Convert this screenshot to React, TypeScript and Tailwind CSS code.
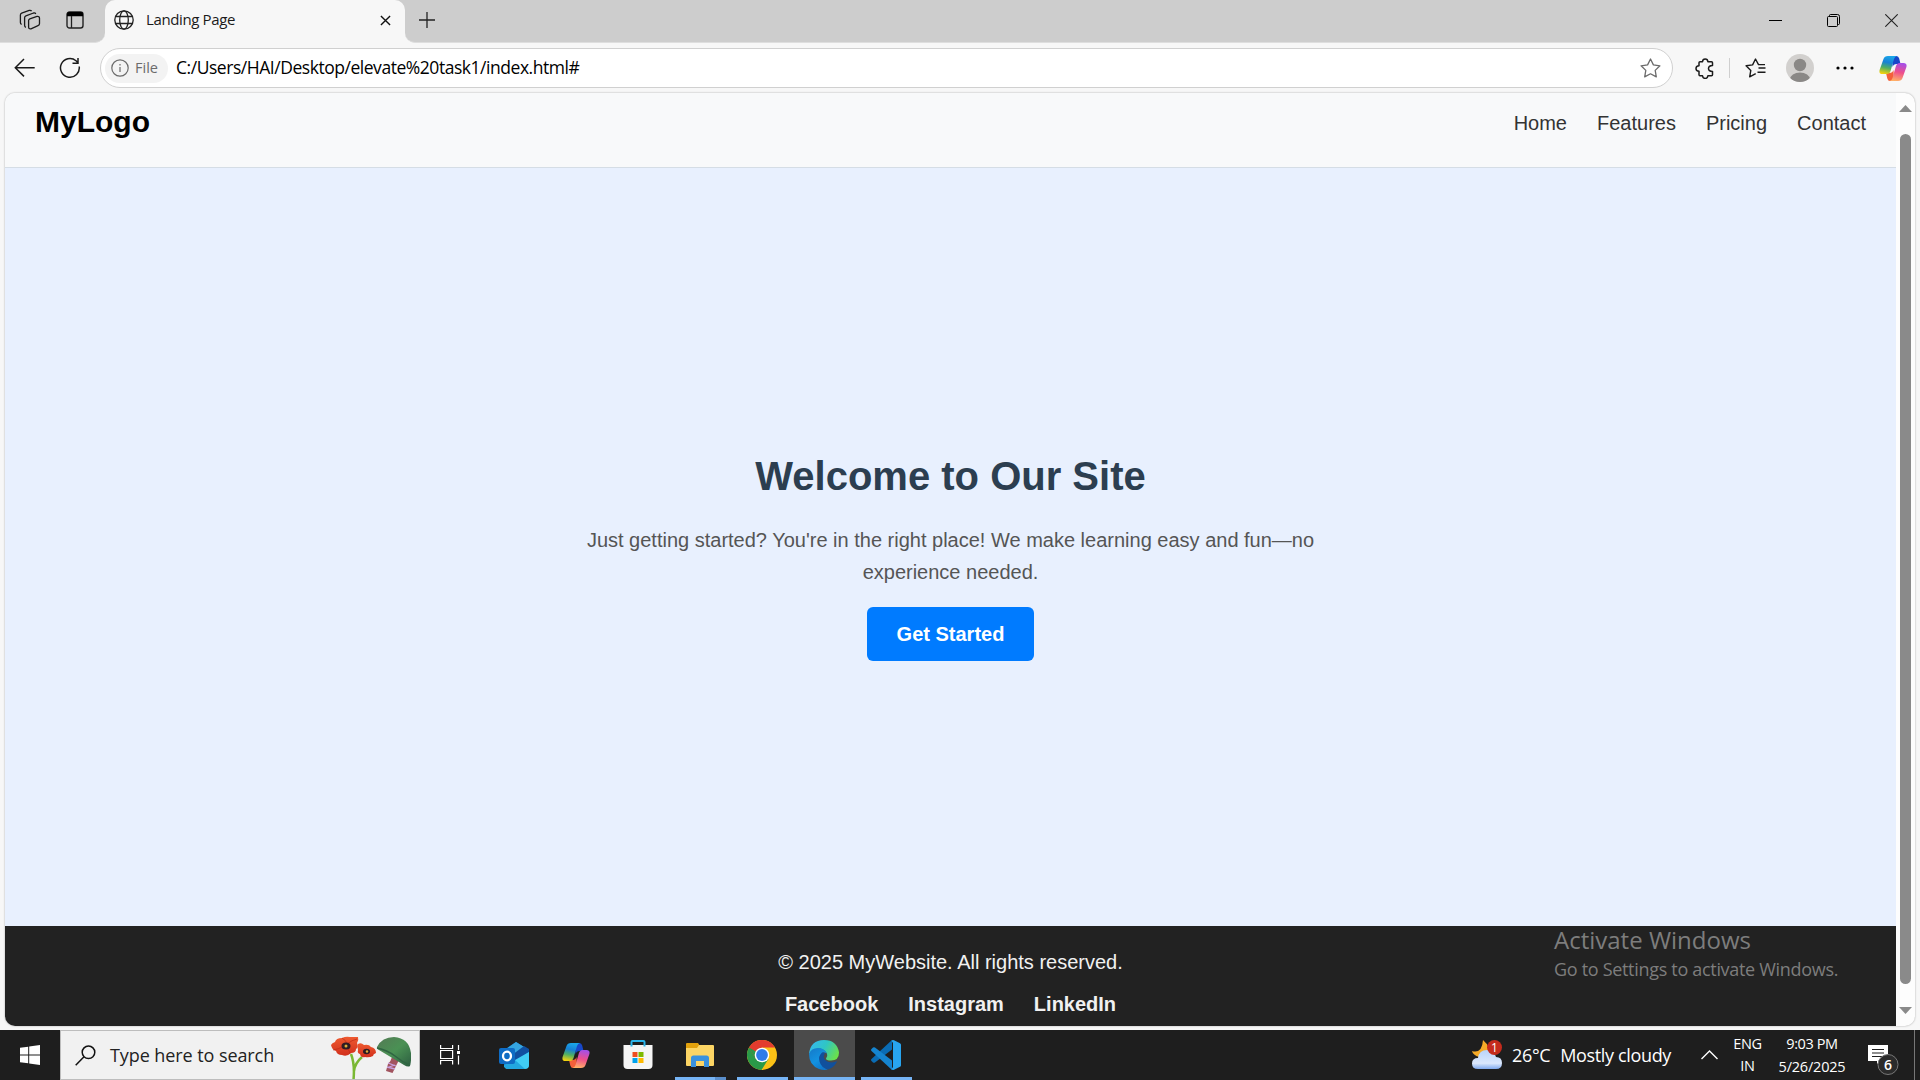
import React from "react";

const UI = "font-['Open_Sans','Noto_Sans',sans-serif]";

function Tabs() {
  return (
    <div className="flex h-[43px] shrink-0 items-stretch bg-[#f7f7f7]">
      <div className="flex w-[105px] items-center rounded-br-[10px] border-b border-[#dedede] bg-[#cdcdcd] pb-0.5 pl-[19px]">
        <svg width="22" height="22" viewBox="0 0 22 22" fill="none" stroke="#1b1b1b" strokeWidth="1.3">
          <path d="M10.800 9.800L18 7.400q2.500-.4 2.500 1.900v5.200q0 1.500-1.500 2.100L12 19.800q-2.400.5-2.400-1.900V11.500q0-1.200 1.200-1.700z" />
          <path d="M6.900 18.300q-1.300-.5-1.300-2V8.800q0-1.400 1.300-1.900L14.500 4q1.700-.4 2.300.9" />
          <path d="M2.600 15.500q-1.200-.6-1.200-2V6q0-1.400 1.300-1.900l7.500-2.700q1.700-.4 2.400.7" />
        </svg>
        <svg className="ml-[25px]" width="18" height="18" viewBox="0 0 18 18">
          <rect x="1" y="1" width="16" height="16" rx="2.5" fill="none" stroke="#222" strokeWidth="1.4" />
          <path d="M1 5.200V3a2 2 0 0 1 2-2h12a2 2 0 0 1 2 2v2.200Z" fill="#000" />
          <path d="M5.500 5v12" stroke="#222" strokeWidth="1.300" />
        </svg>
      </div>
      <div className="flex w-[300px] bg-[#cdcdcd]">
        <div className="flex flex-1 items-center rounded-t-[10px] bg-[#f7f7f7] pb-[3px] pl-[9px] pr-3">
          <svg width="20" height="20" viewBox="0 0 20 20" fill="none" stroke="#222" strokeWidth="1.300">
            <circle cx="10" cy="10" r="9.200" /><ellipse cx="10" cy="10" rx="4.300" ry="9.200" /><path d="M1.700 6.500h16.600M1.700 13.500h16.600" />
          </svg>
          <span className={UI + " -mt-px ml-3 whitespace-nowrap text-[15px] tracking-[-0.38px] text-[#1b1b1b]"}>Landing Page</span>
          <svg className="ml-auto mr-[2px]" width="11" height="11" viewBox="0 0 12 12" stroke="#111" strokeWidth="1.500"><path d="M1 1l10 10M11 1L1 11" /></svg>
        </div>
      </div>
      <div className="flex flex-1 items-center rounded-bl-[10px] border-b border-[#dedede] bg-[#cdcdcd] pb-[2px] pl-[13px]">
        <svg width="18" height="18" viewBox="0 0 18 18" stroke="#222" strokeWidth="1.300"><path d="M9 1v16M1 9h16" /></svg>
        <svg className="ml-auto mr-[45px]" width="13" height="13" viewBox="0 0 13 13" stroke="#000" strokeWidth="1"><path d="M0 6.500h13" /></svg>
        <svg className="mr-[45px]" width="13" height="13" viewBox="0 0 13 13" fill="none" stroke="#000"><rect x=".5" y="2.500" width="10" height="10" rx="1" /><path d="M2.500 2.500V1.500q0-1 1-1h7q2 0 2 2v7q0 1-1 1h-1" /></svg>
        <svg className="mr-[22px] mt-px" width="13" height="13" viewBox="0 0 13 13" stroke="#222" strokeWidth="1.100"><path d="M.3.3l12.400 12.400M12.700.3L.3 12.700" /></svg>
      </div>
    </div>
  );
}

function Copilot({ id }: { id: string }) {
  return (
    <svg width="28" height="27" viewBox="0 0 28 27">
      <defs>
        <linearGradient id={id + "a"} x1=".5" y1="0" x2=".3" y2="1"><stop offset="0" stopColor="#1aa5e8" /><stop offset=".35" stopColor="#1781d6" /><stop offset=".65" stopColor="#4fae63" /><stop offset="1" stopColor="#f5d20c" /></linearGradient>
        <linearGradient id={id + "b"} x1=".6" y1="0" x2=".4" y2="1"><stop offset="0" stopColor="#a54fe8" /><stop offset=".5" stopColor="#ee4f8c" /><stop offset="1" stopColor="#ffb066" /></linearGradient>
      </defs>
      <path d="M13 1h4.500q2 0 2.700 2.600L21.500 9h-4q-3 0-4 3z" fill="#1747c9" />
      <path d="M15 26h-4q-2 0-2.700-2.500L7 18h3.500q3 0 4-3z" fill="#f4603a" />
      <path d="M9 1H18q-2.300.3-3 3L11.700 15.500q-1 3.500-3.700 3.500H3.500Q-.3 19 .6 15L4.400 4.300Q5.500 1 9 1z" fill={"url(#" + id + "a)"} />
      <path d="M19 26H10.500q2.300-.3 3-3l3.300-11.500Q17.800 8 20.500 8h4q3.800 0 2.900 4L23.600 22.700Q22.500 26 19 26z" fill={"url(#" + id + "b)"} />
    </svg>
  );
}

function Toolbar() {
  return (
    <div className="flex h-[50px] shrink-0 items-center bg-[#f7f7f7]">
      <svg className="ml-[14px]" width="22" height="20" viewBox="0 0 22 20" fill="none" stroke="#1b1b1b" strokeWidth="1.500"><path d="M20.700 9.700H1.700M10 1L1.300 9.700 10 18.400" /></svg>
      <svg className="ml-[23px]" width="22" height="22" viewBox="0 0 22 22" fill="none" stroke="#1b1b1b" strokeWidth="1.500"><path d="M20.200 9.500A9.400 9.400 0 1 1 17 3.700L19 5.700M19 1V6.300H13.500" /></svg>
      <div className="ml-[19px] flex h-10 w-[1573px] items-center rounded-full border border-[#d0d0d0] bg-white pl-1 pr-[11px]">
        <div className="flex h-[29px] w-[63px] items-center rounded-full bg-[#f3f3f3] pl-[6px]">
          <svg width="18" height="18" viewBox="0 0 18 18" fill="none" stroke="#6b6b6b" strokeWidth="1.200"><circle cx="9" cy="9" r="8.200" /><path d="M9 8v5M9 5v1.500" /></svg>
          <span className={UI + " ml-[6px] text-[14.5px] font-medium text-[#6b6b6b]"}>File</span>
        </div>
        <span className={UI + " -mt-px ml-2 whitespace-nowrap text-[17.5px] tracking-[-0.46px] text-black"}>C:/Users/HAI/Desktop/elevate%20task1/index.html#</span>
        <svg className="ml-auto" width="21" height="20" viewBox="0 0 21 20" fill="none" stroke="#6b6b6b" strokeWidth="1.300" strokeLinejoin="round"><path d="M10.500 1l2.900 5.900 6.500.9-4.700 4.600 1.100 6.500-5.800-3.100-5.800 3.100 1.100-6.500L1.100 7.800l6.500-.9z" /></svg>
      </div>
      <svg className="ml-[22px]" width="20" height="21" viewBox="0 0 20 21" fill="none" stroke="#1b1b1b" strokeWidth="1.500" strokeLinejoin="round"><path d="M5 3.700H7.500q.2-2.700 2.700-2.700t2.700 2.700H16.500q1 0 1 1V7.500q-4 .2-4 3t4 3V16.700q0 1-1 1H12.900q-.2 2.700-2.700 2.700T7.500 17.700H5q-1 0-1-1V13.200q-3-.2-3-2.700t3-2.700V4.700q0-1 1-1z" /></svg>
      <div className="ml-[14px] h-5 w-px bg-[#cfcfcf]" />
      <svg className="ml-[15px]" width="21" height="20" viewBox="0 0 21 20" fill="none" stroke="#1b1b1b" strokeWidth="1.400" strokeLinejoin="round"><path d="M13.500 6.600L10.500 1 7.600 6.900l-6.500.9 4.700 4.600-1.100 6.500 6-3.200M13.500 10h7M12.500 14.200h8M13 6.600h7" /></svg>
      <svg className="ml-[20px]" width="28" height="28" viewBox="0 0 28 28"><defs><clipPath id="av"><circle cx="14" cy="14" r="14" /></clipPath></defs><g clipPath="url(#av)"><rect width="28" height="28" fill="#d2d0ce" /><circle cx="14" cy="11" r="6.200" fill="#8a8886" /><ellipse cx="14" cy="25.500" rx="10" ry="7" fill="#8a8886" /></g></svg>
      <svg className="ml-[22px]" width="18" height="4" viewBox="0 0 18 4"><circle cx="2" cy="2" r="1.600" /><circle cx="9" cy="2" r="1.600" /><circle cx="16" cy="2" r="1.600" /></svg>
      <div className="ml-[25px]"><Copilot id="tb" /></div>
    </div>
  );
}

function Page() {
  return (
    <div className="flex h-[937px] shrink-0 bg-[#f7f7f7] pl-[5px] pr-[5px] pb-1">
      <div className="flex flex-1 overflow-hidden rounded-[10px] bg-[#fdfdfd] shadow-[0_0_2px_rgba(0,0,0,0.35)]">
        <div className="flex w-[1891px] flex-col font-['Liberation_Sans',Arial,sans-serif] text-[20px]">
          <header className="flex h-[75px] items-start justify-between border-b border-[#d5dde5] bg-[#f8f9fa] pl-[30px] pr-[30px] text-[#333]">
            <div className="mt-[6px] text-[30px] font-bold leading-[46px] text-black">MyLogo</div>
            <nav className="mt-[14px] flex gap-[30px] leading-8"><a>Home</a><a>Features</a><a>Pricing</a><a>Contact</a></nav>
          </header>
          <main className="flex h-[758px] flex-col items-center bg-[#e8f0fe] text-center">
            <h1 className="mt-[276px] text-[40px] font-bold leading-[64px] text-[#2c3e50]">Welcome to Our Site</h1>
            <p className="mt-[16px] w-[750px] leading-8 text-[#555]">Just getting started? You're in the right place! We make learning easy and fun—no experience needed.</p>
            <a className="mt-[19px] flex h-[54px] w-[167px] items-center justify-center rounded-[6px] bg-[#007bff] font-bold text-white">Get Started</a>
          </main>
          <footer className="flex flex-1 flex-col items-center bg-[#222] text-[#f1f1f1]">
            <p className="mt-5 leading-8">© 2025 MyWebsite. All rights reserved.</p>
            <div className="mt-[10px] flex gap-[30px] font-bold leading-8"><a>Facebook</a><a>Instagram</a><a>LinkedIn</a></div>
          </footer>
        </div>
        <div className="flex flex-1 flex-col items-center pr-px">
          <svg className="mt-3" width="13" height="7" viewBox="0 0 13 7" fill="#8a8a8a"><path d="M0 7L6.500 0 13 7z" /></svg>
          <div className="mt-[22px] h-[850px] w-[11px] rounded-full bg-[#8a8a8a]" />
          <svg className="mt-[23px]" width="13" height="7" viewBox="0 0 13 7" fill="#8a8a8a"><path d="M0 0h13L6.500 7z" /></svg>
        </div>
      </div>
    </div>
  );
}

function AppSlot({ children, bar, active }: { children: React.ReactNode; bar?: React.ReactNode; active?: boolean }) {
  return (
    <div className={active ? "flex h-[50px] w-[61px] flex-col items-center bg-[#4b4b4b]" : "flex h-[50px] w-[61px] flex-col items-center"}>
      <div className="flex h-[47px] items-center justify-center pr-[2px] pt-[3px]">{children}</div>
      {bar}
    </div>
  );
}

function Taskbar() {
  return (
    <div className="flex h-[50px] shrink-0 items-stretch bg-[#1e1e1e] text-white">
      <div className="flex w-[60px] items-center justify-center">
        <svg width="20" height="20" viewBox="0 0 20 20" fill="#fff"><path d="M0 2.800L8.200 1.700V9.500H0zM9.200 1.500L20 0v9.500H9.200zM0 10.500h8.200v7.800L0 17.200zM9.200 10.500H20V20L9.200 18.500z" /></svg>
      </div>
      <div className="flex w-[360px] items-center border border-[#bdbdbd] bg-[#f1f1f1] pl-[14px] text-[#222]">
        <svg width="21" height="21" viewBox="0 0 21 21" fill="none" stroke="#111" strokeWidth="1.500"><circle cx="13.500" cy="7.300" r="6.300" /><path d="M9 11.800L.7 20.300" /></svg>
        <span className={UI + " ml-[14px] whitespace-nowrap text-[18px] tracking-[-0.08px]"}>Type here to search</span>
        <svg className="ml-auto mr-2" width="82" height="48" viewBox="0 -1 82 48">
          <defs>
            <linearGradient id="helm" x1="0" y1="0" x2="1" y2="1"><stop offset="0" stopColor="#547a55" /><stop offset=".5" stopColor="#4a9154" /><stop offset="1" stopColor="#2c5d40" /></linearGradient>
            <linearGradient id="petal" x1="0" y1="0" x2="0" y2="1"><stop offset="0" stopColor="#ee5a30" /><stop offset="1" stopColor="#d2301c" /></linearGradient>
          </defs>
          <path d="M22 22q4 10 2.500 26M33 25q-7 6-8 14" fill="none" stroke="#7ab833" strokeWidth="2.500" />
          <path d="M6 10q1-4 7-4 4-2 8-1l8 0q1 3-1 6 2 4-1 6 0 4-5 4-4 4-9 2-5 0-6-4-4-1-5-6 1-2 4-3z" fill="url(#petal)" />
          <path d="M13 6q4 2 5 6 5-4 10-5M4 18q6-1 9-3M19 17q2 3 2 5" fill="none" stroke="#bb2a17" strokeWidth=".7" />
          <ellipse cx="17" cy="14" rx="4.500" ry="3.500" fill="#2e1c22" /><circle cx="17" cy="14" r="1.500" fill="#e0ad38" />
          <path d="M29 12q3-2 6 1 5-1 7 2 5 1 5 6-3 1-3 3-4 2-8 1-4 1-5-3-3-1-2-4-1-3 0-6z" fill="url(#petal)" />
          <ellipse cx="37.500" cy="19.500" rx="3.500" ry="2.800" fill="#2e1c22" /><circle cx="38" cy="19.500" r="1.200" fill="#e0ad38" />
          <path d="M63 25l6.500 4-2.500 5-3.500 7-6.500-2 2-7q3-3 4-7z" fill="#a2545f" /><path d="M59 31l8 3M58 35l8 2M60 35l6-2" stroke="#c9a2e0" strokeWidth="1.300" />
          <path d="M48 15Q53 5 65 5q15 1 17 16 .5 8-1 13-2 1.500-6-1L50 18q-2.500-1-2-3z" fill="url(#helm)" /><path d="M48 16q10 2 18 8 7 6 15 9" fill="none" stroke="#2f6542" strokeWidth="1.500" />
        </svg>
      </div>
      <div className="flex w-[60px] items-center justify-center">
        <svg width="20" height="20" viewBox="0 0 20 20" fill="none" stroke="#fff" strokeWidth="1.200"><path d="M.6 0v3.500h12V0M.6 19.500v-4h12v4M.6 5.500h12v8H.6zM18.500 0v5M18.500 10.500v9" /><path d="M17 6h3v3h-3z" fill="#fff" stroke="none" /></svg>
      </div>
      <div className="ml-1 flex gap-px">
        <AppSlot>
          <svg width="30" height="27" viewBox="0 0 30 27"><path d="M5 8L17 0l13 8v15q0 3-3 3H8q-3 0-3-3z" fill="#1482d0" /><path d="M6 8l11-8 13 8-12 7z" fill="#35a5e0" /><path d="M13 13l12-9 5 3v3L16 19z" fill="#1150a0" /><path d="M16 18l14-8v13q0 4-4 4H9q-3 0-4-3z" fill="#40cef5" /><path d="M5 23l11-5 10 9H9q-3 0-4-3z" fill="#22a7e0" /><rect y="6" width="16" height="16" rx="2" fill="#0f6cc4" /><ellipse cx="8" cy="14" rx="4" ry="4.300" fill="none" stroke="#fff" strokeWidth="2.300" /></svg>
        </AppSlot>
        <AppSlot><Copilot id="tk" /></AppSlot>
        <AppSlot>
          <svg width="30" height="30" viewBox="0 0 30 30"><path d="M.5 5h29v20q0 4-4 4h-21q-4 0-4-4z" fill="#f5f5f5" /><path d="M8.500 6.500V2q0-1 1-1h11q1 0 1 1v4.500" fill="none" stroke="#2bb5ec" strokeWidth="2" /><path fill="#ef4e22" d="M9.500 12h5v5h-5z" /><path fill="#7db900" d="M15.500 12h5v5h-5z" /><path fill="#00a2ed" d="M9.500 18h5v5h-5z" /><path fill="#fdb900" d="M15.500 18h5v5h-5z" /></svg>
        </AppSlot>
        <AppSlot bar={<div className="flex h-[3px] w-[51px] bg-[#5a8fcc]"><div className="w-10 bg-[#76b4f5]" /></div>}>
          <svg width="28" height="24" viewBox="0 0 28 24"><path d="M0 1q0-1 1-1h11l2 3v4H0z" fill="#e2a10c" /><path d="M0 5h11l2-3h14q1 0 1 1v19q0 1-1 1H1q-1 0-1-1z" fill="#fcd564" /><path d="M5 24V15q0-2.500 2.500-2.500h13q2.500 0 2.500 2.500v9h-5v-6h-8v6z" fill="#3a92dd" /></svg>
        </AppSlot>
        <AppSlot bar={<div className="h-[3px] w-[51px] bg-[#76b4f5]" />}>
          <svg width="30" height="30" viewBox="0 0 30 30"><circle cx="15" cy="15" r="15" fill="#fbc116" /><path d="M15 15L2 7.500A15 15 0 0 0 14.500 30L21.500 18.700z" fill="#2a9a48" /><path d="M2 7.500A15 15 0 0 1 28 7.500H15L8.500 18.700z" fill="#e33b2e" /><path d="M2 7.500L8.500 18.700 15 15z" fill="#2a9a48" /><circle cx="15" cy="15" r="7.300" fill="#fff" /><circle cx="15" cy="15" r="5.900" fill="#2f7bea" /></svg>
        </AppSlot>
        <AppSlot active bar={<div className="h-[3px] w-full bg-[#76b4f5]" />}>
          <svg width="30" height="30" viewBox="0 0 30 30">
            <defs>
              <linearGradient id="eg" x1="0" y1=".2" x2="1" y2=".6"><stop offset="0" stopColor="#35b8f0" /><stop offset=".5" stopColor="#2fc6c4" /><stop offset="1" stopColor="#6be04a" /></linearGradient>
              <linearGradient id="eb" x1="0" y1="0" x2=".6" y2="1"><stop offset="0" stopColor="#1579c8" /><stop offset=".6" stopColor="#1392e0" /><stop offset="1" stopColor="#0f78cc" /></linearGradient>
            </defs>
            <path d="M0 14Q1.500 0 15 0q13 0 15 12.500 0 8-8 8-5 0-5-2 2-2 1-5-3-5-9-5-7 1-9 6z" fill="url(#eg)" />
            <path d="M0 14q2-6 9-6 6.500 0 9 5.500-3-2-5 0-4 4 0 10.500 3 5 6 5.500-4 1-9-.5Q0 25 0 14z" fill="url(#eb)" />
            <path d="M13 12.500q-4 3.500-2.500 9Q12 27.500 19 29.500q6-2 8.800-7.500.3-1-.8-.6-7 2.500-11-1.400-2.500-3.500 0-6.500-1.500-2-3-1z" fill="#11509c" />
          </svg>
        </AppSlot>
        <AppSlot bar={<div className="h-[3px] w-[51px] bg-[#76b4f5]" />}>
          <svg width="30" height="30" viewBox="0 0 30 30"><path d="M21 0v9.500L4 22.500q-1 .7-2 0L.5 21q-1-1 0-2z" fill="#0a6cb4" /><path d="M21 30v-9.500L4 7.500q-1-.7-2 0L.5 9q-1 1 0 2z" fill="#1584cf" /><path d="M20.500.8Q21.500-.4 23 .3L29 3.200q1 .5 1 1.600v20.400q0 1.100-1 1.600L23 29.700q-1.500.7-2.500-.5L22 27V3z" fill="#28a5f0" /></svg>
        </AppSlot>
      </div>
      <div className="ml-auto flex">
        <svg className="mr-[9px] mt-[10px]" width="31" height="30" viewBox="0 0 31 30"><defs><linearGradient id="cl" x1="0" y1="0" x2="0" y2="1"><stop offset="0" stopColor="#b9d4fb" /><stop offset=".7" stopColor="#dbe8fd" /><stop offset="1" stopColor="#7fa9ee" /></linearGradient></defs><path d="M11 0q8 7 6 15l-10 2Q1 15 0 11q10 3 11-11z" fill="#f6ab28" /><path d="M6 29q-6 0-6-5.500T6 18q1-8 9-8 7 0 9 7 6 0 6 6t-6 6z" fill="url(#cl)" /><circle cx="22.500" cy="7.500" r="7.500" fill="#c42b1c" /><text x="22.500" y="12" fontSize="12" fill="#fff" textAnchor="middle" fontFamily="Open Sans">1</text></svg>
        <div className={UI + " flex w-[189px] items-center gap-[10px] whitespace-nowrap text-[18px] tracking-[-0.35px]"}><span>26°C</span><span>Mostly cloudy</span></div>
        <svg className="mt-[20px]" width="17" height="10" viewBox="0 0 17 10" fill="none" stroke="#fff" strokeWidth="1.400"><path d="M.5 9L8.500 1l8 8" /></svg>
        <div className={UI + " ml-[14px] mt-[3px] flex w-[31px] flex-col items-center text-[14.5px] leading-[22px] tracking-[-0.3px]"}><span>ENG</span><span>IN</span></div>
        <div className={UI + " ml-[12px] mt-[2px] flex w-[74px] flex-col items-center whitespace-nowrap text-[14.5px] leading-[23px] tracking-[-0.2px]"}><span className="tracking-[-0.4px]">9:03 PM</span><span>5/26/2025</span></div>
        <svg className="ml-[19px] mt-[14px]" width="31" height="32" viewBox="0 0 31 32"><path d="M0 1h20v16h-8l-3 3v-3H0z" fill="#fff" /><path d="M4 5.500h12M4 9h12M4 12.500h12" stroke="#1e1e1e" strokeWidth="1.200" /><circle cx="20" cy="20.500" r="10" fill="#2b2b2b" stroke="#777" /><text x="20" y="25.500" fontSize="14" fontWeight="600" fill="#fff" textAnchor="middle" fontFamily="Open Sans">6</text></svg>
        <div className="ml-[15px] mr-[5px] w-px bg-[#777]" />
      </div>
    </div>
  );
}

export default function App() {
  return (
    <div className="relative flex h-[1080px] w-[1920px] flex-col overflow-hidden bg-[#f7f7f7]">
      <Tabs />
      <Toolbar />
      <Page />
      <Taskbar />
      <div className={UI + " absolute left-[1554px] top-[923px] whitespace-nowrap text-[#7d7d7d]"}>
        <div className="text-[24px] leading-[34px]">Activate Windows</div>
        <div className="text-[18px] leading-[24px] tracking-[-0.31px]">Go to Settings to activate Windows.</div>
      </div>
    </div>
  );
}
